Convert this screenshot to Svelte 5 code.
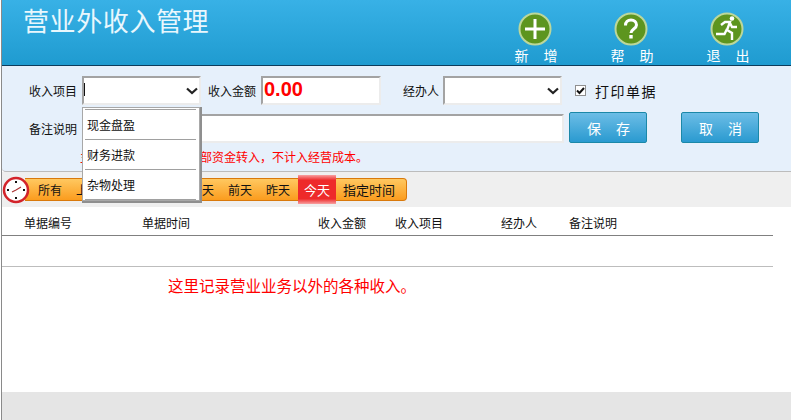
<script>
    const filters = ["所有", "上月", "本月", "本周", "三天", "前天", "昨天"];
    const columns = [
        { name: "单据编号", width: 118 },
        { name: "单据时间", width: 176 },
        { name: "收入金额", width: 77 },
        { name: "收入项目", width: 106 },
        { name: "经办人", width: 68 },
        { name: "备注说明", width: 100 }
    ];
    const options = ["现金盘盈", "财务进款", "杂物处理"];
</script>

<main class="page">
    <header class="top">
        <h1>营业外收入管理</h1>
        <nav class="actions">
            <div class="action">
                <svg width="34" height="34" viewBox="0 0 34 34">
                    <circle cx="17" cy="17" r="15.5" fill="#5d951f" stroke="#bcd79a" stroke-width="2" />
                    <path d="M17 7v20M7 17h20" stroke="#fff" stroke-width="3" />
                </svg>
                <span>新增</span>
            </div>
            <div class="action">
                <svg width="34" height="34" viewBox="0 0 34 34">
                    <circle cx="17" cy="17" r="15.5" fill="#5d951f" stroke="#bcd79a" stroke-width="2" />
                    <path d="M11.5 13.5c0-3.5 2.300-5.500 5.500-5.500s5.500 2 5.500 5c0 4-5.500 4-5.500 8" fill="none" stroke="#fff" stroke-width="3" />
                    <rect x="15.300" y="23" width="3.400" height="3.500" fill="#fff" />
                </svg>
                <span>帮助</span>
            </div>
            <div class="action">
                <svg width="34" height="34" viewBox="0 0 34 34">
                    <circle cx="17" cy="17" r="15.500" fill="#5d951f" stroke="#bcd79a" stroke-width="2" />
                    <circle cx="22" cy="6.500" r="2.300" fill="#fff" />
                    <path d="M11 13l4-3h5l-3 8 5 3v7M17 17l-2.500 5H6M20 11l2 4h5" fill="none" stroke="#fff" stroke-width="2.400" />
                </svg>
                <span>退出</span>
            </div>
        </nav>
    </header>

    <section class="form">
        <div class="row">
            <label class="label first" for="item">收入项目</label>
            <div class="combo">
                <input id="item" type="text" />
                <i class="caret"></i>
                <svg class="chevron" width="12" height="8" viewBox="0 0 12 8"><path d="M1 1.500l5 4.500 5-4.500" fill="none" stroke="#222" stroke-width="2.200" /></svg>
            </div>
            <label class="label amount-label" for="amount">收入金额</label>
            <input id="amount" class="amount" type="text" value="0.00" />
            <label class="label person-label" for="person">经办人</label>
            <div class="combo person">
                <input id="person" type="text" />
                <svg class="chevron" width="12" height="8" viewBox="0 0 12 8"><path d="M1 1.500l5 4.500 5-4.500" fill="none" stroke="#222" stroke-width="2.200" /></svg>
            </div>
            <span class="check">
                <svg width="11" height="11" viewBox="0 0 11 11"><rect x=".5" y=".5" width="10" height="10" fill="#fff" stroke="#8f8f8f" /><path d="M2 5.500l2.500 2.500 4.500-5" fill="none" stroke="#111" stroke-width="2" /></svg>
            </span>
            <span class="print">打印单据</span>
        </div>
        <div class="row second">
            <label class="label first" for="note">备注说明</label>
            <input id="note" class="note" type="text" />
            <button class="btn">保存</button>
            <button class="btn cancel">取消</button>
        </div>
        <p class="hint">主要指非营业收入或外部资金转入，不计入经营成本。</p>

        <div class="dropdown">
            <ul>
                {#each options as option}
                    <li>{option}</li>
                {/each}
            </ul>
        </div>
    </section>

    <section class="filter">
        <svg class="clock" width="28" height="28" viewBox="0 0 28 28">
            <circle cx="14" cy="14" r="12" fill="#fff" stroke="#d3232a" stroke-width="2.500" />
            <path d="M14 14l5-3M14 14l-4 2" stroke="#a33" stroke-width="1.200" />
            <path d="M14 5v2M14 21v2M5 14h2M21 14h2" stroke="#111" stroke-width="2" />
        </svg>
        <div class="bar">
            {#each filters as filter}
                <span class="tab">{filter}</span>
            {/each}
            <span class="tab today">今天</span>
            <span class="tab custom">指定时间</span>
        </div>
    </section>

    <section class="table">
        <div class="thead">
            {#each columns as col}
                <span style="width: {col.width}px">{col.name}</span>
            {/each}
        </div>
        <div class="empty-row"></div>
        <p class="message">这里记录营业业务以外的各种收入。</p>
    </section>

    <footer class="bottom"></footer>
</main>

<style>
:global(body) {
    margin: 0;
    background: #fff;
}

.page {
    position: relative;
    width: 790px;
    height: 420px;
    margin-left: 1px;
    overflow: hidden;
    display: flex;
    flex-direction: column;
    font-family: "Noto Sans CJK SC", "Liberation Sans", sans-serif;
    font-size: 12px;
    color: #111;
    border-left: 1px solid #8a8a8a;
    box-sizing: border-box;
}

.top {
    height: 65px;
    flex: none;
    display: flex;
    justify-content: space-between;
    background: linear-gradient(#38b1e6, #1f9bd0);
    border-bottom: 1px solid #0d3c5c;
}

h1 {
    margin: 2px 0 0 21px;
    font-size: 26px;
    line-height: 36px;
    font-weight: 400;
    letter-spacing: 0.600px;
    color: #e9f7fd;
}

.actions {
    display: flex;
    margin-right: 16px;
}

.action {
    width: 96px;
    display: flex;
    flex-direction: column;
    align-items: center;
    padding-top: 12px;
    color: #fff;
}

.action span {
    font-size: 14px;
    line-height: 18px;
    letter-spacing: 15px;
    margin-right: -17px;
}

.form {
    position: relative;
    height: 106px;
    flex: none;
    box-sizing: border-box;
    padding-top: 10px;
    background: #e6f0fb;
    border-bottom: 1px solid #bcbcbc;
    border-bottom-left-radius: 4px;
}

.row {
    display: flex;
    align-items: center;
    height: 29px;
}

.second {
    margin-top: 9px;
}

.label {
    font-size: 12px;
    white-space: nowrap;
}

.first {
    margin-left: 27px;
    width: 53px;
}

input {
    box-sizing: border-box;
    height: 29px;
    margin: 0;
    border: 2px solid #ececec;
    border-top-color: #a3a3a3;
    border-left-color: #a3a3a3;
    background: #fff;
    outline: none;
    font-family: inherit;
}

.combo {
    position: relative;
    width: 119px;
    height: 29px;
}

.combo input {
    width: 100%;
}

.caret {
    position: absolute;
    left: 2px;
    top: 7px;
    width: 1px;
    height: 13px;
    background: #111;
}

.chevron {
    position: absolute;
    right: 3px;
    top: 11px;
}

.amount-label {
    margin-left: 7px;
    width: 53px;
}

.amount {
    width: 120px;
    padding: 0 0 2px 1px;
    font-family: "Liberation Sans", sans-serif;
    font-size: 20px;
    font-weight: 700;
    color: #f00;
}

.person-label {
    margin-left: 22px;
    width: 40px;
}

.check {
    display: flex;
    margin-left: 13px;
}

.print {
    margin-left: 9px;
    font-size: 14px;
    letter-spacing: 1.500px;
}

.note {
    width: 482px;
}

.btn {
    width: 78px;
    height: 31px;
    padding: 0;
    margin: -2px 0 0 5px;
    border: 1px solid #1b88a8;
    border-radius: 2px;
    background: linear-gradient(#6cbde6, #2a9ad0);
    color: #fff;
    font-family: inherit;
    font-size: 14px;
    letter-spacing: 15px;
    text-indent: 16px;
}

.cancel {
    margin-left: 34px;
}

.hint {
    margin: 6px 0 0 78px;
    line-height: 16px;
    font-size: 12px;
    color: #f00;
}

.dropdown {
    position: absolute;
    left: 80px;
    top: 41px;
    z-index: 2;
    width: 118px;
    height: 94px;
    box-sizing: border-box;
    padding: 1px 3px 0 2px;
    background: #fff;
    border: 1px solid #a8a8a8;
    box-shadow: 1px 1px 0 1px #8f8f8f;
}

ul {
    margin: 0;
    padding: 0;
    list-style: none;
    border-top: 1px solid #a0a0a0;
}

li {
    height: 29px;
    line-height: 29px;
    padding-left: 2px;
    border-bottom: 1px solid #a0a0a0;
    font-size: 12px;
}

.filter {
    height: 35px;
    flex: none;
    display: flex;
    align-items: center;
    background: #efefef;
}

.clock {
    position: relative;
    z-index: 1;
}

.bar {
    display: flex;
    align-items: center;
    width: 382px;
    height: 23px;
    box-sizing: border-box;
    margin-left: -5px;
    padding-left: 6px;
    background: linear-gradient(#ffc860, #fb9c1e);
    border: 1px solid #d9790b;
    border-left: none;
    border-radius: 0 4px 4px 0;
}

.tab {
    width: 38px;
    flex: none;
    text-align: center;
    font-size: 12px;
    line-height: 21px;
}

.today {
    height: 29px;
    margin-left: 1px;
    line-height: 29px;
    background: linear-gradient(#f8a0a0 0, #ee2a2a 18%, #ee2a2a 82%, #f8a0a0 100%);
    color: #fff;
    font-size: 13px;
}

.custom {
    width: auto;
    margin-left: 7px;
    font-size: 13px;
}

.table {
    flex: 1;
    background: #fff;
}

.thead {
    display: flex;
    width: 771px;
    height: 29px;
    box-sizing: border-box;
    padding: 2px 0 0 22px;
    align-items: center;
    border-bottom: 1px solid #808080;
}

.thead span {
    flex: none;
}

.empty-row {
    width: 771px;
    height: 30px;
    border-bottom: 1px solid #bdbdbd;
}

.message {
    margin: 8px 0 0 166px;
    font-size: 15.500px;
    line-height: 20px;
    color: #f00;
}

.bottom {
    height: 28px;
    flex: none;
    background: #e5e5e5;
}
</style>
